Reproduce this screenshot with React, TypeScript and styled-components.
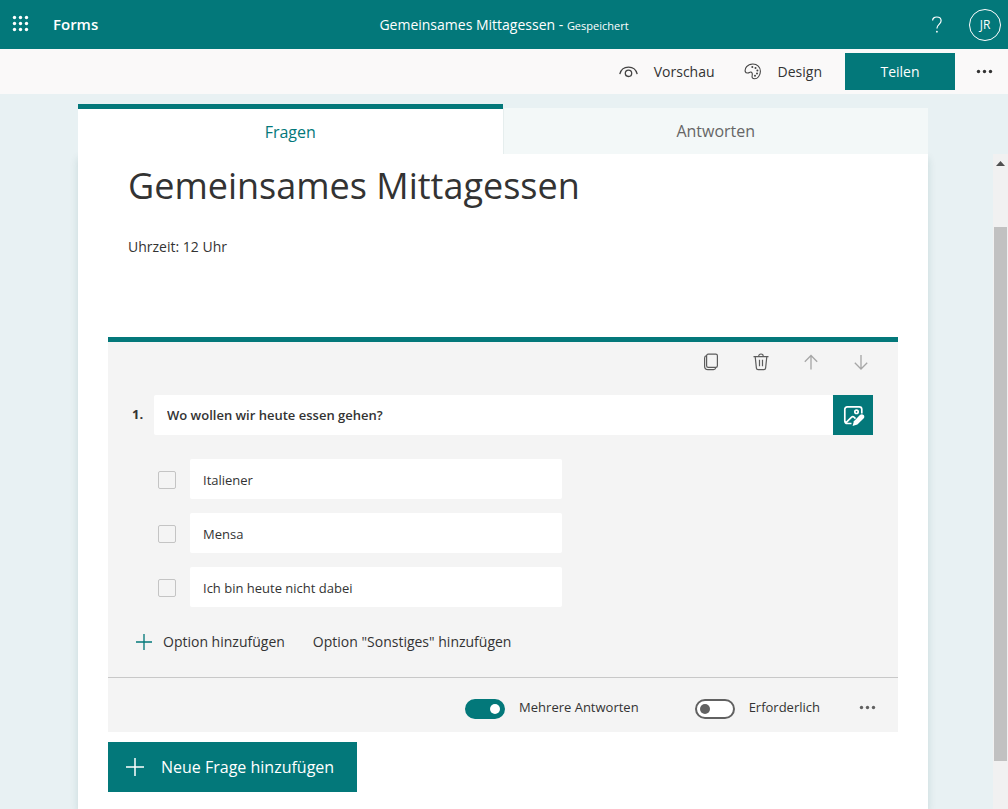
import React from "react";
import styled, { createGlobalStyle } from "styled-components";

const teal = "#03787a";

const GlobalStyle = createGlobalStyle`
  *, *::before, *::after { box-sizing: border-box; }
  html, body { margin: 0; padding: 0; }
  body, button, input {
    font-family: "Open Sans", "Noto Sans", sans-serif;
    color: #333;
  }
  button { border: 0; padding: 0; background: none; cursor: pointer; }
  svg { display: block; flex: none; }
`;

const Page = styled.div`
  display: flex;
  flex-direction: column;
  min-height: 100vh;
  background: #e8f1f3;
`;

const TopBar = styled.header`
  display: grid;
  grid-template-columns: 1fr auto 1fr;
  align-items: center;
  height: 49px;
  padding: 0 7px;
  background: ${teal};
  color: #fff;
`;

const Brand = styled.div`
  display: flex;
  align-items: center;
  gap: 24px;
  padding: 0 0 2px 5px;
`;

const BrandLink = styled.a`
  color: #fff;
  font-size: 15px;
  font-weight: 600;
  line-height: 20px;
  text-decoration: none;
`;

const DocumentName = styled.div`
  padding-top: 2px;
  font-size: 14px;
  line-height: 20px;
  white-space: nowrap;
`;

const SaveState = styled.span`
  font-size: 11px;
`;

const Account = styled.div`
  display: flex;
  align-items: center;
  justify-content: flex-end;
  gap: 26px;
`;

const Avatar = styled.button`
  width: 32px;
  height: 32px;
  border: 1px solid #fff;
  border-radius: 50%;
  color: #fff;
  font-size: 12px;
  line-height: 16px;
`;

const Toolbar = styled.nav`
  display: flex;
  align-items: center;
  justify-content: flex-end;
  height: 45px;
  padding-right: 15px;
  background: #faf9f9;
`;

const ToolButton = styled.button`
  display: flex;
  align-items: center;
  gap: 16px;
  margin-right: 29px;
  font-size: 14px;
  line-height: 20px;

  & + & { margin-right: 23px; }
`;

const ShareButton = styled.button`
  width: 110px;
  height: 37px;
  margin-right: 21px;
  background: ${teal};
  color: #fff;
  font-size: 14px;
  line-height: 20px;
`;

const Workspace = styled.main`
  display: flex;
  flex-direction: column;
  flex: 1;
  padding: 10px 0 0 78px;
`;

const Tabs = styled.div`
  position: relative;
  z-index: 1;
  display: flex;
  align-items: flex-end;
  height: 50px;
  margin-right: 80px;
`;

const Tab = styled.button<{ $active?: boolean }>`
  flex: 1;
  height: ${(p) => (p.$active ? 50 : 46)}px;
  border-top: ${(p) => (p.$active ? `5px solid ${teal}` : "0")};
  border-left: ${(p) => (p.$active ? "0" : "1px solid #e6eeee")};
  background: ${(p) => (p.$active ? "#fff" : "#f3f8f8")};
  color: ${(p) => (p.$active ? teal : "#666")};
  font-size: 16px;
  line-height: 24px;
`;

const ScrollArea = styled.div`
  display: flex;
  flex: 1;
`;

const Sheet = styled.form`
  flex: 1;
  margin-right: 65px;
  padding: 8px 30px 17px;
  background: #fff;
  box-shadow: 0 4px 8px rgba(3, 80, 80, 0.14);
`;

const Intro = styled.section`
  min-height: 175px;
  padding: 0 20px;
`;

const FormTitle = styled.h1`
  margin: 0;
  font-size: 36px;
  font-weight: 400;
  line-height: 48px;
`;

const Description = styled.p`
  margin: 27px 0 0;
  font-size: 14px;
  line-height: 20px;
`;

const QuestionCard = styled.section`
  border-top: 5px solid ${teal};
  background: #f4f4f4;
`;

const QuestionActions = styled.div`
  display: flex;
  justify-content: flex-end;
  gap: 10px;
  padding-right: 17px;
`;

const IconButton = styled.button`
  display: flex;
  align-items: center;
  justify-content: center;
  width: 40px;
  height: 40px;
  color: #5c5c5c;

  &:disabled { color: #a6a6a6; }
`;

const QuestionRow = styled.div`
  display: flex;
  align-items: center;
  padding: 13px 25px 0 24px;
`;

const QuestionNumber = styled.label`
  width: 22px;
  padding-bottom: 2px;
  font-size: 13px;
  font-weight: 700;
  line-height: 20px;
`;

const TextField = styled.input<{ $strong?: boolean }>`
  flex: 1;
  min-width: 0;
  height: 40px;
  padding: ${(p) => (p.$strong ? "0 13px" : "2px 13px 0")};
  border: 0;
  border-radius: 2px;
  background: #fff;
  font-size: 13px;
  font-weight: ${(p) => (p.$strong ? 600 : 400)};
  line-height: 20px;
`;

const MediaButton = styled.button`
  display: flex;
  align-items: center;
  justify-content: center;
  width: 40px;
  height: 40px;
  padding: 1px 0 0 1px;
  background: ${teal};
  color: #fff;
`;

const Options = styled.ul`
  display: flex;
  flex-direction: column;
  gap: 14px;
  width: 454px;
  max-width: 100%;
  margin: 24px 0 0;
  padding: 0 0 0 50px;
  list-style: none;
`;

const OptionRow = styled.li`
  display: flex;
  align-items: center;
  gap: 14px;
`;

const OptionCheck = styled.input`
  appearance: none;
  width: 18px;
  height: 18px;
  margin: 2px 0 0;
  border: 1px solid #c4c4c4;
  border-radius: 2px;
`;

const AddRow = styled.div`
  display: flex;
  align-items: center;
  gap: 28px;
  padding: 25px 28px;
`;

const AddButton = styled.button`
  display: flex;
  align-items: center;
  gap: 11px;
  font-size: 14px;
  line-height: 20px;
`;

const QuestionFooter = styled.div`
  display: flex;
  align-items: center;
  justify-content: flex-end;
  height: 55px;
  padding: 4px 11px 0 0;
  border-top: 1px solid #c8c8c8;
`;

const ToggleLabel = styled.label`
  display: flex;
  align-items: center;
  gap: 14px;
  margin-right: 56px;
  font-size: 13px;
  line-height: 20px;

  & + & { margin-right: 27px; }
`;

const Switch = styled.input`
  appearance: none;
  display: flex;
  align-items: center;
  width: 40px;
  height: 20px;
  margin: 4px 0 0;
  padding: 0 3px;
  border: 2px solid #616161;
  border-radius: 10px;
  background: #fff;

  &::before {
    content: "";
    width: 10px;
    height: 10px;
    border-radius: 50%;
    background: #616161;
  }

  &:checked {
    justify-content: flex-end;
    border-color: ${teal};
    background: ${teal};
  }

  &:checked::before { background: #fff; }
`;

const NewQuestionButton = styled.button`
  display: flex;
  align-items: center;
  gap: 17px;
  height: 50px;
  margin-top: 10px;
  padding: 0 23px 0 18px;
  background: ${teal};
  color: #fff;
  font-size: 16px;
  line-height: 24px;
`;

const ScrollTrack = styled.div`
  display: flex;
  flex-direction: column;
  align-items: center;
  width: 15px;
  background: #f1f1f1;
`;

const ScrollArrow = styled.div`
  flex: 73;

  svg { margin-top: 7px; }
`;

const ScrollThumb = styled.div`
  flex: 534;
  width: 13px;
  background: #c1c1c1;
`;

const ScrollRest = styled.div`
  flex: 48;
`;

const Waffle = () => (
  <svg width="17" height="17" viewBox="0 0 17 17" fill="#fff">
    {[2.5, 8.5, 14.5].map((y) =>
      [2.5, 8.5, 14.5].map((x) => <circle key={`${x}-${y}`} cx={x} cy={y} r="1.7" />)
    )}
  </svg>
);

const HelpIcon = () => (
  <svg width="12" height="18" viewBox="0 0 12 18" fill="none" stroke="#fff" strokeWidth="1.2">
    <path d="M1.6 4.6C1.6 2.4 3.4 1 5.8 1s4.3 1.4 4.3 3.8c0 3.4-4.2 3.9-4.2 7.6" />
    <circle cx="5.9" cy="15.7" r="0.9" fill="#fff" stroke="none" />
  </svg>
);

const EyeIcon = () => (
  <svg width="19" height="12" viewBox="0 0 19 12" fill="none" stroke="#444" strokeWidth="1.3">
    <path d="M.8 8.2C1.8 3.9 5.3 1.2 9.5 1.2s7.700 2.700 8.700 7" />
    <circle cx="9.500" cy="7.300" r="3.200" />
  </svg>
);

const PaletteIcon = () => (
  <svg width="18" height="17" viewBox="0 0 18 17" fill="none" stroke="#444" strokeWidth="1.1">
    <path d="M1.300 8.800C.4 5.600 3.200 1 8.800 1c4.500 0 7.600 3 7.600 7.200 0 4.600-3 7.600-5.700 7.600-2.600 0-2.900-1.700-2.500-3.600.3-1.600-.2-3.200-1.500-3.200-1 0-1.500.8-2.700 1-1.200.1-2.300-.2-2.700-1.200Z" />
    <g fill="#444" stroke="none">
      <circle cx="8.300" cy="3.900" r="1" />
      <circle cx="11.500" cy="4.900" r="1" />
      <circle cx="13.400" cy="7.500" r="1" />
      <circle cx="13" cy="10.500" r="1" />
      <circle cx="11" cy="12.800" r="1" />
    </g>
  </svg>
);

const DotsIcon = ({ color = "#333" }: { color?: string }) => (
  <svg width="17" height="5" viewBox="0 0 17 5" fill={color}>
    <circle cx="2.500" cy="2.500" r="1.700" />
    <circle cx="8.500" cy="2.500" r="1.700" />
    <circle cx="14.500" cy="2.500" r="1.700" />
  </svg>
);

const CopyIcon = () => (
  <svg width="16" height="18" viewBox="0 0 16 18" fill="none" stroke="currentColor" strokeWidth="1.200">
    <rect x="3.600" y="1.200" width="10.800" height="13.200" rx="1.600" />
    <path d="M3.600 2.700C2.200 3 1.600 3.700 1.600 5v8.200c0 2.200 1.200 3.400 3.400 3.400h5.500c1.200 0 2-.6 2.300-2" />
  </svg>
);

const TrashIcon = () => (
  <svg width="16" height="18" viewBox="0 0 16 18" fill="none" stroke="currentColor" strokeWidth="1.200">
    <path d="M.5 3.600h15M5.700 3.400C5.700 1.800 6.600 1 8 1s2.300.8 2.300 2.400M2.200 3.800l1.200 11.300c.1 1.100.7 1.600 1.700 1.600h5.800c1 0 1.600-.5 1.700-1.600l1.200-11.300M6.500 6.800v6.500M9.500 6.800v6.500" />
  </svg>
);

const ArrowIcon = ({ down }: { down?: boolean }) => (
  <svg width="16" height="18" viewBox="0 0 16 18" fill="none" stroke="currentColor" strokeWidth="1.300">
    <path d={down ? "M8 2v14M1.800 9.800 8 16l6.200-6.200" : "M8 16.500V2.500M1.800 8.700 8 2.500l6.200 6.200"} />
  </svg>
);

const ImageEditIcon = () => (
  <svg width="22" height="22" viewBox="0 0 22 22" fill="none" stroke="currentColor" strokeWidth="1.700">
    <path d="M8.500 18.500H4.300c-1.500 0-2.500-1-2.500-2.500V4.300c0-1.500 1-2.500 2.500-2.500h12c1.500 0 2.500 1 2.500 2.500v4.200M3 17.600l5.600-5.400c.8-.8 1.600-.8 2.400 0l1.500 1.400" />
    <circle cx="13.500" cy="6.800" r="1.700" />
    <path d="m16.900 10.100c1.300-1.300 2.700-1.100 3.700-.1 1 1 1 2.400-.1 3.500l-6.100 6-4.800 1.500 1.300-4.800Z" fill="currentColor" stroke="none" />
  </svg>
);

const PlusIcon = ({ size, color }: { size: number; color: string }) => (
  <svg width={size} height={size} viewBox="0 0 18 18" fill="none" stroke={color} strokeWidth="1.500">
    <path d="M9 0v18M0 9h18" />
  </svg>
);

const answers = ["Italiener", "Mensa", "Ich bin heute nicht dabei"];

export default function App() {
  return (
    <Page>
      <GlobalStyle />
      <TopBar>
        <Brand>
          <button type="button" aria-label="App-Startfeld"><Waffle /></button>
          <BrandLink href="#">Forms</BrandLink>
        </Brand>
        <DocumentName>
          Gemeinsames Mittagessen - <SaveState>Gespeichert</SaveState>
        </DocumentName>
        <Account>
          <button type="button" aria-label="Hilfe"><HelpIcon /></button>
          <Avatar type="button">JR</Avatar>
        </Account>
      </TopBar>

      <Toolbar>
        <ToolButton type="button"><EyeIcon />Vorschau</ToolButton>
        <ToolButton type="button"><PaletteIcon />Design</ToolButton>
        <ShareButton type="button">Teilen</ShareButton>
        <button type="button" aria-label="Weitere Optionen"><DotsIcon /></button>
      </Toolbar>

      <Workspace>
        <Tabs role="tablist">
          <Tab type="button" role="tab" aria-selected="true" $active>Fragen</Tab>
          <Tab type="button" role="tab" aria-selected="false">Antworten</Tab>
        </Tabs>

        <ScrollArea>
          <Sheet>
            <Intro>
              <FormTitle>Gemeinsames Mittagessen</FormTitle>
              <Description>Uhrzeit: 12 Uhr</Description>
            </Intro>

            <QuestionCard>
              <QuestionActions>
                <IconButton type="button" aria-label="Kopieren"><CopyIcon /></IconButton>
                <IconButton type="button" aria-label="Löschen"><TrashIcon /></IconButton>
                <IconButton type="button" aria-label="Nach oben" disabled><ArrowIcon /></IconButton>
                <IconButton type="button" aria-label="Nach unten" disabled><ArrowIcon down /></IconButton>
              </QuestionActions>

              <QuestionRow>
                <QuestionNumber htmlFor="question-1">1.</QuestionNumber>
                <TextField id="question-1" type="text" defaultValue="Wo wollen wir heute essen gehen?" $strong />
                <MediaButton type="button" aria-label="Medien einfügen"><ImageEditIcon /></MediaButton>
              </QuestionRow>

              <Options>
                {answers.map((answer) => (
                  <OptionRow key={answer}>
                    <OptionCheck type="checkbox" aria-label={answer} />
                    <TextField type="text" aria-label="Optionstext" defaultValue={answer} />
                  </OptionRow>
                ))}
              </Options>

              <AddRow>
                <AddButton type="button"><PlusIcon size={16} color={teal} />Option hinzufügen</AddButton>
                <AddButton type="button">Option "Sonstiges" hinzufügen</AddButton>
              </AddRow>

              <QuestionFooter>
                <ToggleLabel>
                  <Switch type="checkbox" role="switch" defaultChecked />
                  Mehrere Antworten
                </ToggleLabel>
                <ToggleLabel>
                  <Switch type="checkbox" role="switch" />
                  Erforderlich
                </ToggleLabel>
                <IconButton type="button" aria-label="Weitere Einstellungen"><DotsIcon color="#616161" /></IconButton>
              </QuestionFooter>
            </QuestionCard>

            <NewQuestionButton type="button">
              <PlusIcon size={18} color="#fff" />
              Neue Frage hinzufügen
            </NewQuestionButton>
          </Sheet>

          <ScrollTrack aria-hidden="true">
            <ScrollArrow>
              <svg width="9" height="5" viewBox="0 0 9 5"><path d="M4.500 0 9 5H0Z" fill="#505050" /></svg>
            </ScrollArrow>
            <ScrollThumb />
            <ScrollRest />
          </ScrollTrack>
        </ScrollArea>
      </Workspace>
    </Page>
  );
}
